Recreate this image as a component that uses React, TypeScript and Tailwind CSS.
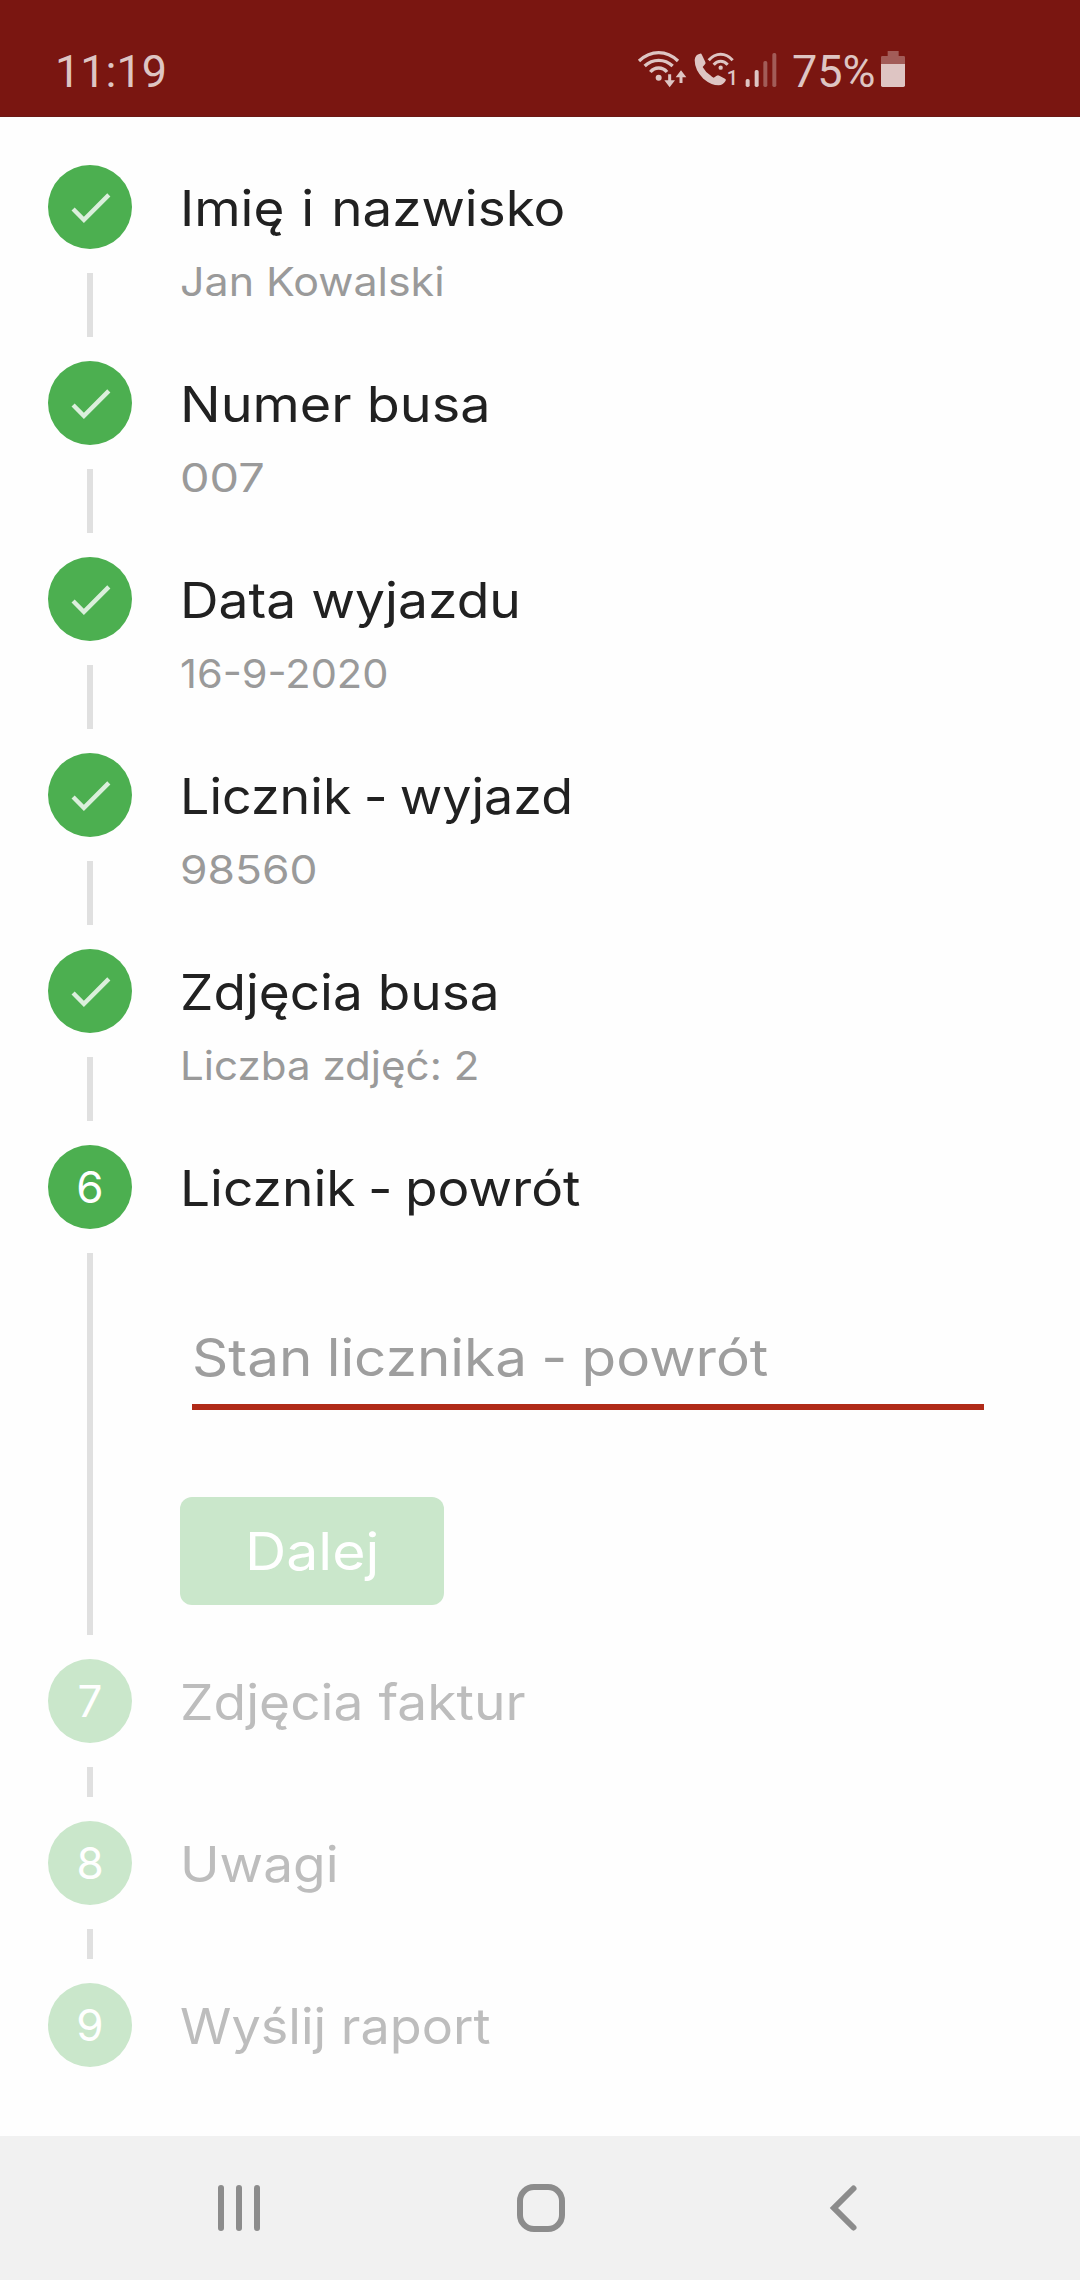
import React from 'react'

type Step = {
  id: number
  title: string
  titleScale: string
  value?: string
  valueScale?: string
  state: 'done' | 'active' | 'pending'
}

const steps: Step[] = [
  { id: 1, title: 'Imię i nazwisko', titleScale: 'scale-x-[1.07] [word-spacing:2px]', value: 'Jan Kowalski', valueScale: 'scale-x-[1.074]', state: 'done' },
  { id: 2, title: 'Numer busa', titleScale: 'scale-x-[1.09]', value: '007', valueScale: 'scale-x-[1.172]', state: 'done' },
  { id: 3, title: 'Data wyjazdu', titleScale: 'scale-x-[1.079]', value: '16-9-2020', valueScale: 'scale-x-[1.039]', state: 'done' },
  { id: 4, title: 'Licznik - wyjazd', titleScale: 'scale-x-[1.05] [word-spacing:-2.3px]', value: '98560', valueScale: 'scale-x-[1.109]', state: 'done' },
  { id: 5, title: 'Zdjęcia busa', titleScale: 'scale-x-[1.073]', value: 'Liczba zdjęć: 2', valueScale: 'scale-x-[1.053]', state: 'done' },
  { id: 6, title: 'Licznik - powrót', titleScale: 'scale-x-[1.075] [word-spacing:-2.3px]', state: 'active' },
  { id: 7, title: 'Zdjęcia faktur', titleScale: 'scale-x-[1.077]', state: 'pending' },
  { id: 8, title: 'Uwagi', titleScale: 'scale-x-[1.075]', state: 'pending' },
  { id: 9, title: 'Wyślij raport', titleScale: 'scale-x-[1.054]', state: 'pending' },
]

function StatusBar() {
  return (
    <header className="flex h-[117px] shrink-0 items-start border-b border-[#6b1a16] bg-[#7a1611] pt-12 font-[Roboto,sans-serif] text-[45px] leading-[48px] text-[#dec5c3]">
      <span className="ml-[55px] w-[581px]">11:19</span>
      <svg className="h-10 w-[51px] shrink-0" viewBox="48 54 153 120" fill="none" stroke="currentColor" strokeWidth="10">
        <path d="M57 93Q84 68 116 68Q148 68 174 93" />
        <path d="M74 108Q92 91 116 91Q140 91 158 108" />
        <path d="M91 126Q101 114 116 114Q131 114 141 126" />
        <circle cx="116" cy="143" r="9" fill="currentColor" stroke="none" />
        <path d="M149 133V160M183 159V132" strokeWidth="9" />
        <path d="M133 151H165L149 172ZM167 142H199L183 121Z" fill="currentColor" stroke="none" />
      </svg>
      <svg className="ml-1.5 h-10 w-11 shrink-0 overflow-visible" viewBox="219 54 132 120" fill="none" stroke="currentColor" strokeWidth="9">
        <path
          d="M224 90Q225 74 240 71Q244 70 246 75L256 96Q258 100 255 103L248 111Q256 126 271 136Q276 141 281 143L290 137Q294 134 298 137L315 146Q319 148 317 152Q310 164 296 166Q274 166 250 146Q224 120 224 90Z"
          fill="currentColor"
          stroke="none"
        />
        <path d="M266 91Q282 73 302 73Q322 73 338 91" />
        <path d="M281 104Q290 94 302 94Q314 94 323 104" />
        <circle cx="302" cy="113" r="6.5" fill="currentColor" stroke="none" />
        <text x="320" y="165" fontSize="60" fontWeight="500" fill="currentColor" stroke="none">1</text>
      </svg>
      <svg className="ml-[7px] h-10 w-[33px] shrink-0" viewBox="372 54 99 120" fill="currentColor">
        <rect x="377" y="147" width="12" height="24" rx="5" />
        <rect x="404" y="120" width="12" height="51" rx="5" />
        <rect x="430" y="93" width="12" height="78" rx="5" fill="#a25c58" />
        <rect x="457" y="69" width="12" height="102" rx="5" fill="#a25c58" />
      </svg>
      <span className="ml-[15px] w-[89px]">75%</span>
      <svg className="h-10 w-6 shrink-0" viewBox="783 54 72 120">
        <path d="M783 102V82Q783 78 787 78H803V63H836V78H851Q855 78 855 82V102Z" fill="#a25c58" />
        <path d="M783 102H855V166Q855 171 850 171H788Q783 171 783 166Z" fill="currentColor" />
      </svg>
    </header>
  )
}

function StepBadge({ step }: { step: Step }) {
  const color = step.state === 'pending' ? 'bg-[#cae7cb]' : 'bg-[#4caf50]'
  return (
    <div className={`flex size-[84px] shrink-0 items-center justify-center rounded-full text-[44px] text-white ${color}`}>
      {step.state === 'done' ? (
        <svg className="size-[53px] text-[#dbefdc]" viewBox="0 0 24 24" fill="currentColor">
          <path d="M9 16.17L4.83 12l-1.42 1.41L9 19 21 7l-1.41-1.41z" />
        </svg>
      ) : (
        <span className="leading-[84px]">{step.id}</span>
      )}
    </div>
  )
}

function MileageForm() {
  return (
    <div className="flex flex-col items-start pt-[97px] pb-[54px]">
      <div className="ml-3 h-[82px] w-[792px] border-b-[6px] border-[#b02a18] text-[52px] leading-[60px] text-[#9e9e9e]">
        <span className="inline-block origin-left scale-x-[1.089] whitespace-nowrap [word-spacing:-1.5px]">Stan licznika - powrót</span>
      </div>
      <button className="mt-[87px] h-[108px] w-[264px] rounded-xl bg-[#cae7cb] pt-0.5 text-[52px] leading-[106px] text-white">
        <span className="inline-block scale-x-[1.1]">Dalej</span>
      </button>
    </div>
  )
}

function StepRow({ step, last }: { step: Step; last: boolean }) {
  const titleColor = step.state === 'pending' ? 'text-[#bdbdbd]' : 'text-[#212121]'
  const height = last ? '' : step.state === 'done' ? 'min-h-[196px]' : 'min-h-[162px]'
  return (
    <li className={`flex gap-12 ${height}`}>
      <div className="flex flex-col items-center gap-6 pb-6">
        <StepBadge step={step} />
        {!last && <div className="w-1.5 grow bg-[#e0e0e0]" />}
      </div>
      <div className="flex flex-col items-start">
        <h2 className={`origin-left text-[49.5px] leading-[86px] whitespace-nowrap ${step.titleScale} ${titleColor}`}>{step.title}</h2>
        {step.value && (
          <p className={`origin-left text-[40px] leading-[61px] whitespace-nowrap text-[#9a9a9a] ${step.valueScale}`}>{step.value}</p>
        )}
        {step.state === 'active' && <MileageForm />}
      </div>
    </li>
  )
}

function NavigationBar() {
  return (
    <nav className="flex h-36 shrink-0 items-center bg-[#f1f1f1] text-[#8c8c8c]">
      <div className="ml-[218px] flex gap-3">
        <span className="h-[46px] w-1.5 rounded-full bg-current" />
        <span className="h-[46px] w-1.5 rounded-full bg-current" />
        <span className="h-[46px] w-1.5 rounded-full bg-current" />
      </div>
      <div className="ml-[257px] size-12 rounded-[17px] border-[6px] border-current" />
      <svg className="ml-[264px] h-12 w-[30px]" viewBox="0 0 30 48" fill="none" stroke="currentColor" strokeWidth="6" strokeLinecap="round">
        <path d="M24.5 4.5L5 24L24.5 43.5" />
      </svg>
    </nav>
  )
}

export default function App() {
  return (
    <div className="flex h-[2280px] w-[1080px] flex-col overflow-hidden bg-[#fefefe] font-[Inter,sans-serif]">
      <StatusBar />
      <ol className="grow px-12 pt-12">
        {steps.map((step, i) => (
          <StepRow key={step.id} step={step} last={i === steps.length - 1} />
        ))}
      </ol>
      <NavigationBar />
    </div>
  )
}
